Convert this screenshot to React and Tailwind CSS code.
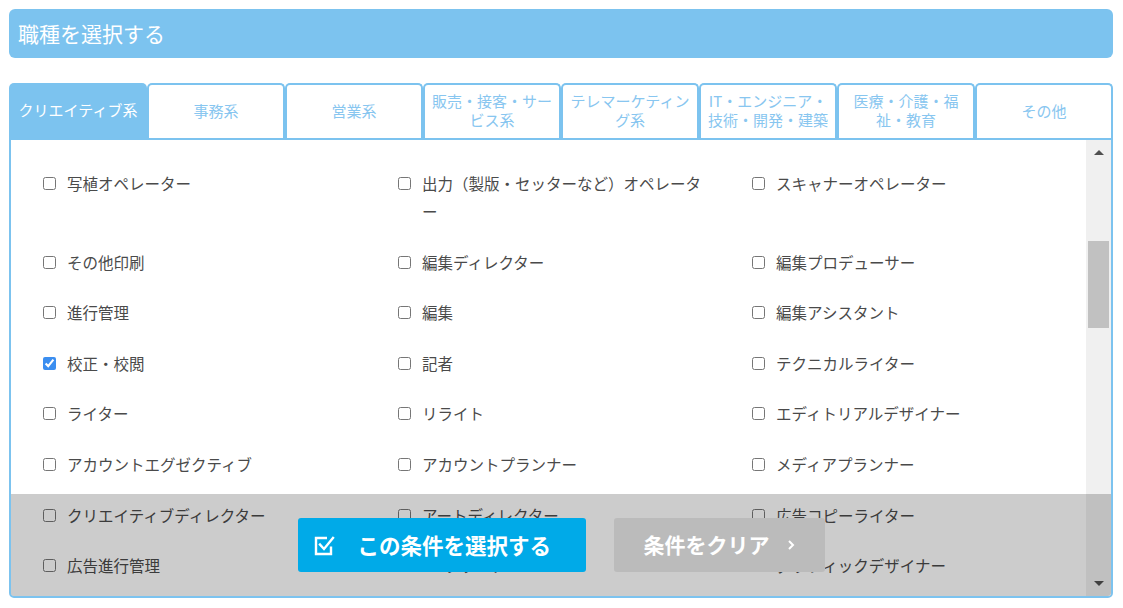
import { useState } from 'react';

const tabs = [
  'クリエイティブ系',
  '事務系',
  '営業系',
  '販売・接客・サービス系',
  'テレマーケティング系',
  'IT・エンジニア・技術・開発・建築',
  '医療・介護・福祉・教育',
  'その他',
];

const jobs = [
  ['写植オペレーター', '出力（製版・セッターなど）オペレーター', 'スキャナーオペレーター'],
  ['その他印刷', '編集ディレクター', '編集プロデューサー'],
  ['進行管理', '編集', '編集アシスタント'],
  ['校正・校閲', '記者', 'テクニカルライター'],
  ['ライター', 'リライト', 'エディトリアルデザイナー'],
  ['アカウントエグゼクティブ', 'アカウントプランナー', 'メディアプランナー'],
  ['クリエイティブディレクター', 'アートディレクター', '広告コピーライター'],
  ['広告進行管理', 'CMプランナー', 'グラフィックデザイナー'],
];

function Item({ label, defaultChecked }) {
  return (
    <label className="flex items-start gap-[11px] w-[330px]">
      <input
        type="checkbox"
        defaultChecked={defaultChecked}
        className="mt-[8px] w-[13px] h-[13px] shrink-0 accent-[#3b8ef0]"
      />
      <span className="w-[285px] text-[15.5px] leading-[28px] text-[#4a4a4a]">{label}</span>
    </label>
  );
}

export default function App() {
  const [active, setActive] = useState(0);

  return (
    <div
      className="w-[1123px] h-[608px] bg-white p-[9px] pr-[10px]"
      style={{ fontFamily: '"Noto Sans CJK JP", "Noto Sans", sans-serif' }}
    >
      {/* Title bar */}
      <div className="h-[49px] rounded-[6px] bg-[#7cc3ef] flex items-center px-[9px]">
        <h1 className="text-white text-[21px] font-normal">職種を選択する</h1>
      </div>

      {/* Tabs */}
      <div className="mt-[25px] grid grid-cols-8 h-[55px]">
        {tabs.map((t, i) => (
          <button
            key={t}
            type="button"
            onClick={() => setActive(i)}
            className={
              i === active
                ? 'rounded-t-[5px] bg-[#7cc3ef] text-white text-[15px] leading-[19px] px-1 pb-[3px]'
                : 'rounded-t-[5px] border-2 border-b-0 border-[#7cc3ef] bg-white text-[#88c6f0] text-[15px] leading-[19px] px-1 pb-[3px]'
            }
          >
            {t}
          </button>
        ))}
      </div>

      {/* Panel */}
      <div className="relative h-[460px] border-2 border-[#7cc3ef] rounded-b-[5px] flex overflow-hidden">
        <div className="flex-1 overflow-hidden pl-[32px] pt-[29px]">
          <div className="grid grid-cols-[355px_354px_330px] gap-y-[22.6px]">
            {jobs.map((row, r) =>
              row.map((j, c) => (
                <Item key={`${r}-${c}`} label={j} defaultChecked={j === '校正・校閲'} />
              ))
            )}
          </div>
        </div>

        {/* Scrollbar */}
        <div className="w-[25px] bg-[#f0f0f0] flex flex-col items-center">
          <div className="h-[25px] flex items-center justify-center">
            <div className="w-0 h-0 border-l-[5px] border-r-[5px] border-b-[5px] border-l-transparent border-r-transparent border-b-[#505050]" />
          </div>
          <div className="mt-[76px] w-[21px] h-[87px] bg-[#c1c1c1]" />
          <div className="flex-1" />
          <div className="h-[26px] flex items-center justify-center">
            <div className="w-0 h-0 border-l-[5px] border-r-[5px] border-t-[5px] border-l-transparent border-r-transparent border-t-[#505050]" />
          </div>
        </div>

        {/* Bottom action overlay */}
        <div className="absolute left-0 right-0 bottom-0 h-[102px] bg-black/20 flex items-center justify-center gap-[28px]">
          <button
            type="button"
            className="w-[288px] h-[54px] rounded-[3px] bg-[#00aae8] text-white text-[21.5px] font-bold flex items-center justify-start pl-[16px] gap-[23px]"
          >
            <svg width="21" height="21" viewBox="0 0 21 21" fill="none" stroke="white" strokeWidth="2.4">
              <path d="M17 11.5V19H2V3h11" />
              <path d="M6 9.5l4 4.5 9-11" strokeLinecap="square" />
            </svg>
            この条件を選択する
          </button>
          <button
            type="button"
            className="w-[211px] h-[54px] rounded-[3px] bg-[#bbbbbb] text-white text-[21px] font-bold flex items-center justify-center gap-[17px]"
          >
            条件をクリア
            <svg width="8" height="12" viewBox="0 0 8 12" fill="none" stroke="white" strokeWidth="2">
              <path d="M2 2l4 4-4 4" />
            </svg>
          </button>
        </div>
      </div>
    </div>
  );
}
